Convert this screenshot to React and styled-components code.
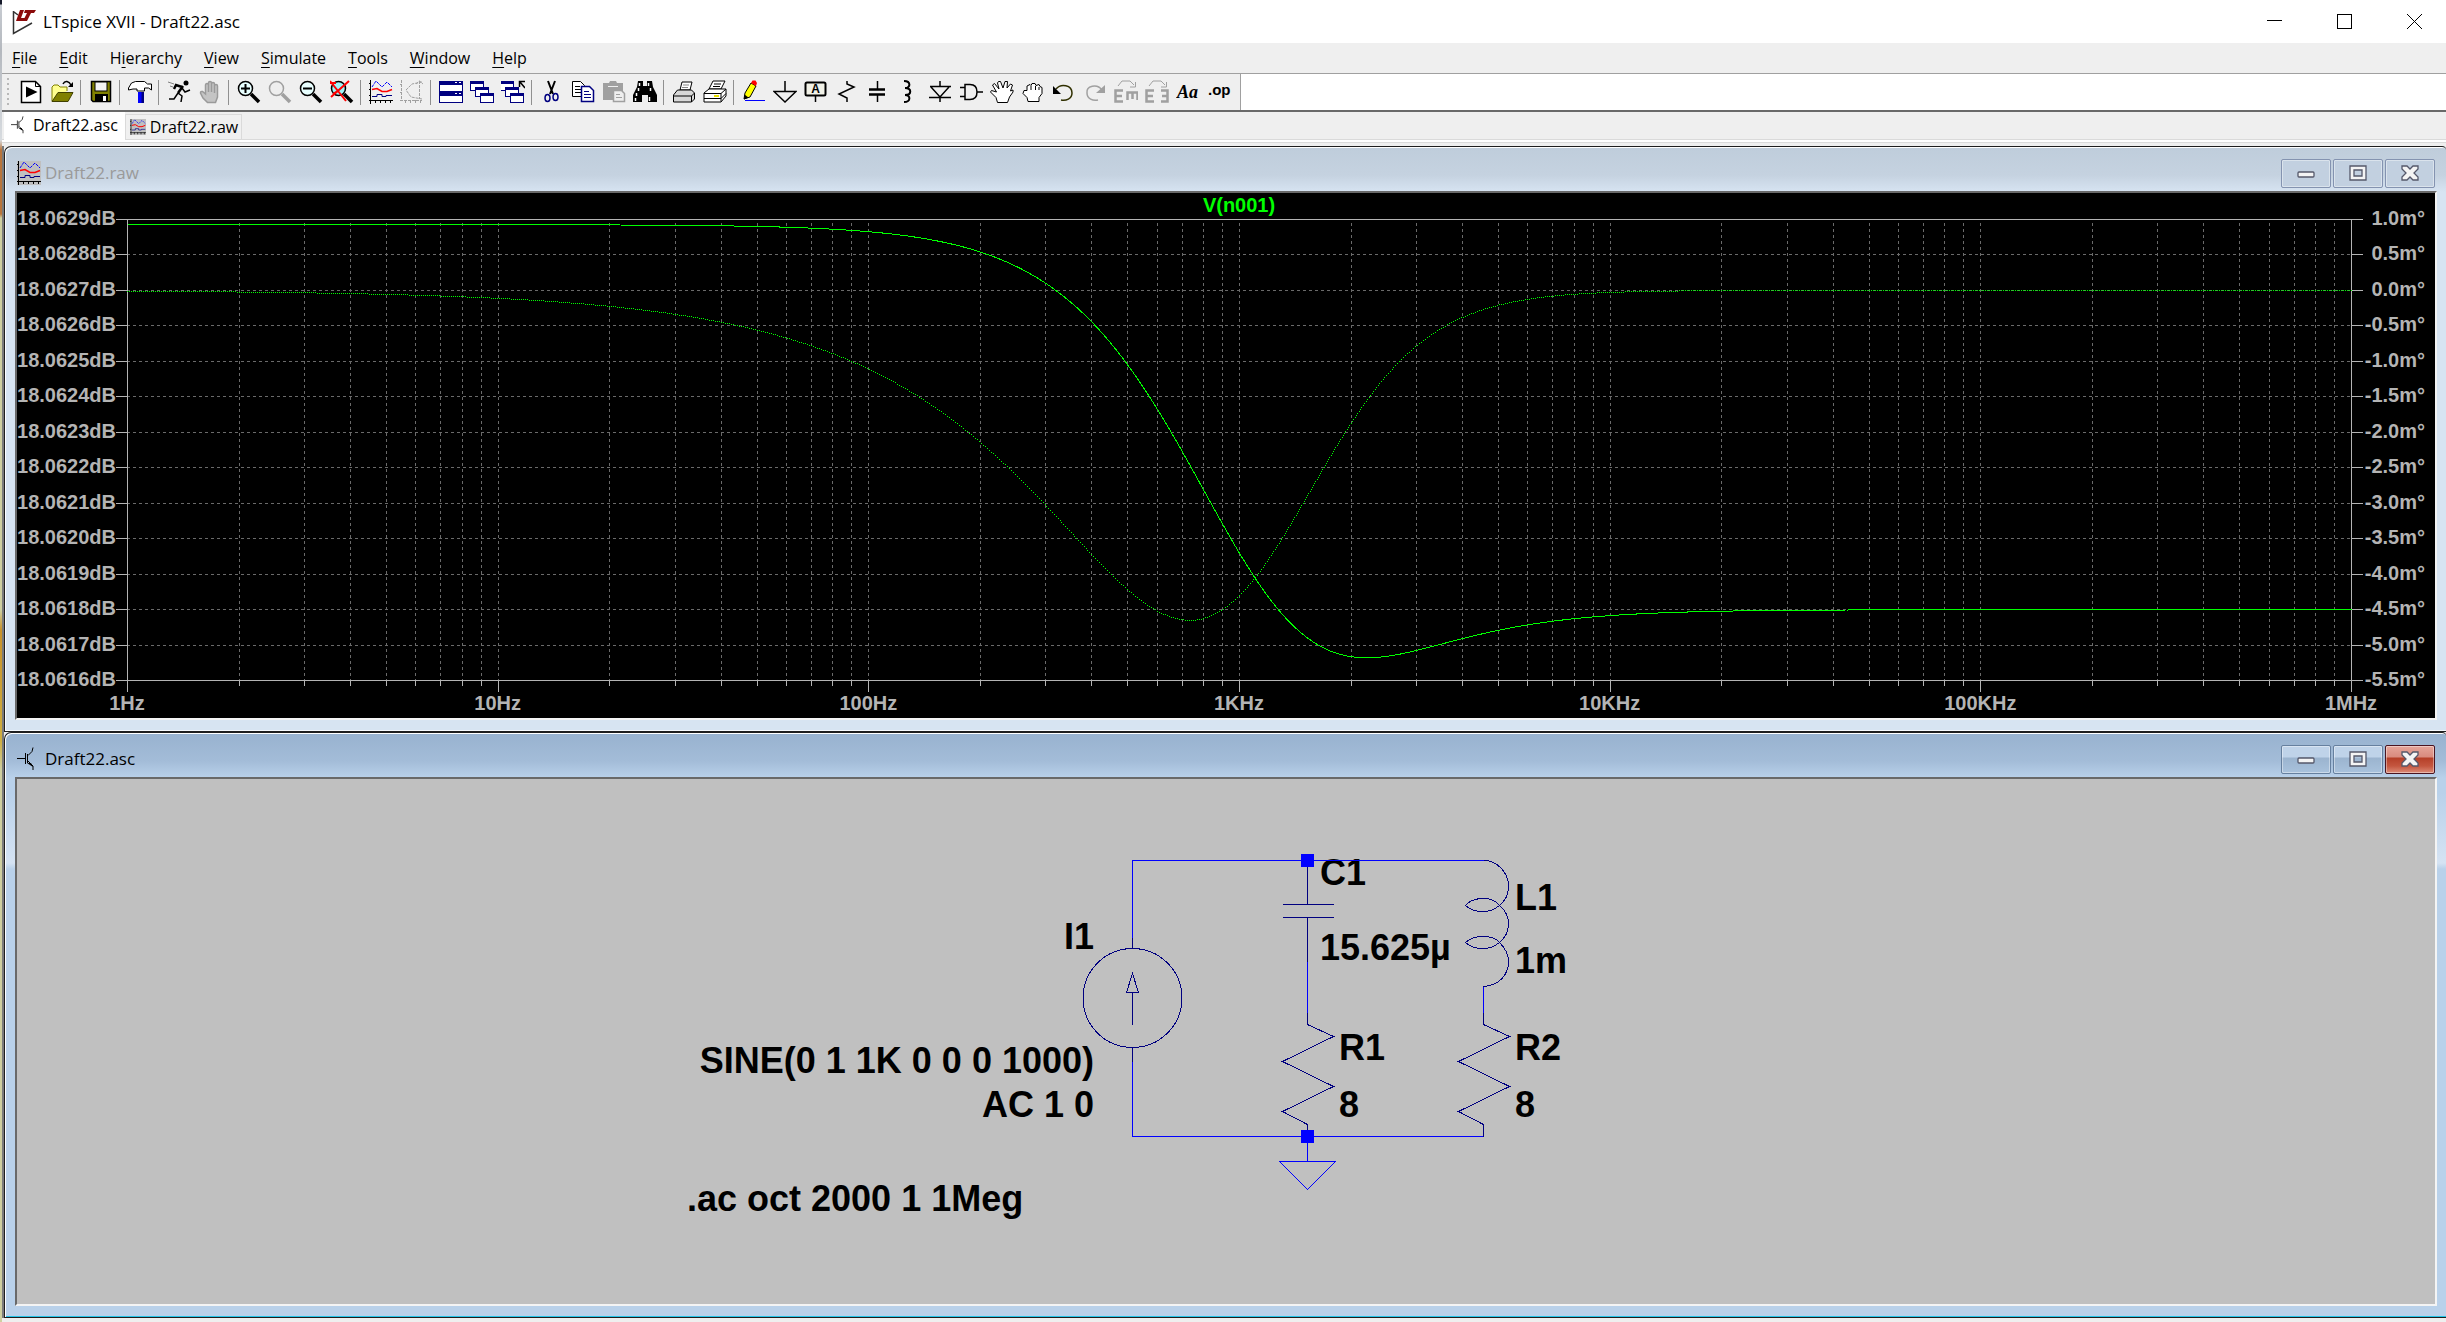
import { useLayoutEffect, useRef, useState } from "react";
import styled, { createGlobalStyle } from "styled-components";

const UI_FONT = `"Open Sans", "Noto Sans", sans-serif`;
const PLOT_FONT = `"Liberation Sans", Arial, sans-serif`;

const GlobalStyle = createGlobalStyle`
  * {
    box-sizing: border-box;
  }
  body {
    margin: 0;
    font-family: ${UI_FONT};
    color: #000;
  }
  button {
    font-family: inherit;
    color: inherit;
    border: none;
    background: none;
    padding: 0;
  }
  svg {
    display: block;
  }
`;

const Desktop = styled.div`
  min-height: 100vh;
  padding-left: 2px;
  display: flex;
  background: linear-gradient(
    #15192a 0, #15192a 4px, #c8ccd2 5px, #b4b8be 50px, #d8dce0 140px,
    #b8753c 150px, #b8753c 214px, #cfcfa0 218px, #cfcfa0 610px,
    #c8922c 630px, #cfae40 740px, #cfcfa0 770px, #cfcfa0 100%
  );
`;

const AppWindow = styled.div`
  flex: 1;
  min-width: 0;
  display: flex;
  flex-direction: column;
  background: #efefef;
`;

const TitleBar = styled.header`
  height: 43px;
  display: flex;
  align-items: center;
  padding-left: 10px;
  background: #fff;
`;

const AppTitle = styled.h1`
  flex: 1;
  margin: 0 0 0 5px;
  font-size: 17px;
  line-height: 24px;
  font-weight: 400;
`;

const SystemButton = styled.button`
  width: 70px;
  height: 43px;
  padding-left: 8px;
  display: flex;
  align-items: center;
  justify-content: center;
`;

const MenuBar = styled.nav`
  height: 31px;
  display: flex;
  border-bottom: 1px solid #a0a0a0;
`;

const MenuItem = styled.button`
  padding: 0 11px;
  font-size: 16px;
  line-height: 30px;

  &:first-child {
    padding-left: 10px;
  }

  u {
    text-underline-offset: 3px;
  }
`;

const ToolBarRow = styled.div`
  height: 38px;
  display: flex;
  background: #fff;
  border-bottom: 2px solid #696969;
`;

const ToolBar = styled.div`
  display: flex;
  align-items: center;
  padding: 0 6px 0 5px;
  background: #efefef;
  border-right: 1px solid #a0a0a0;
`;

const Grip = styled.span`
  width: 2px;
  height: 28px;
  margin-right: 6px;
  background: repeating-linear-gradient(#b8b8b8 0 2px, transparent 2px 5px);
`;

const ToolButton = styled.button`
  width: 31px;
  height: 32px;
  display: flex;
  align-items: center;
  justify-content: center;
`;

const Separator = styled.span`
  width: 8px;
  height: 25px;
  display: flex;
  padding-left: 3px;

  &::before {
    content: "";
    width: 1px;
    background: #909090;
  }
`;

const Tabs = styled.div`
  height: 31px;
  display: flex;
  align-items: flex-start;
  padding-left: 2px;
  background: linear-gradient(
    transparent 27px, #dadada 27px 28px, #fff 28px 30px, #dadada 30px 31px
  );
`;

const Tab = styled.button`
  height: ${(p) => (p.$active ? 30 : 26)}px;
  margin-top: ${(p) => (p.$active ? 0 : 2)}px;
  padding: ${(p) => (p.$active ? "0 7px 4px 7px" : "0 3px 0 4px")};
  display: flex;
  align-items: center;
  gap: 4px;
  font-size: 16px;
  line-height: 24px;
  background: ${(p) => (p.$active ? "#fff" : "#f0f0f0")};
  border: ${(p) => (p.$active ? "none" : "1px solid #dadada")};
`;

const Workspace = styled.main`
  flex: 1;
  margin: 3px 0 4px;
  display: flex;
  flex-direction: column;
  border-left: 2px solid #7a7a7a;
`;

const Child = styled.section`
  flex: 1;
  min-height: 240px;
  display: flex;
  flex-direction: column;
  padding: 0 9px 11px 10px;
  border: 1px solid #1e1e1e;
  border-width: 1px 0 1px 1px;
  border-radius: 7px 4px 0 0;
  box-shadow: inset 1px 1px 0 #fff,
    inset 0 -1px 0 ${(p) => (p.$active ? "#22c4e8" : "#f4f8fc")};
  background: ${(p) =>
    p.$active
      ? "linear-gradient(#98b2cf 0, #a3bcd8 28px, #b9d1ea 45px, #b9d1ea 60px, #d5e3f3 130px, #b9d1ea 136px)"
      : "linear-gradient(#bfcddb 0, #c5d2e0 28px, #d7e4f2 45px)"};
`;

const ChildBar = styled.div`
  flex: none;
  height: 44px;
  padding: 8px 2px 0 2px;
  display: flex;
  align-items: center;
`;

const ChildTitle = styled.h2`
  flex: 1;
  margin: 0 0 0 4px;
  font-size: 17px;
  line-height: 24px;
  font-weight: 400;
  color: ${(p) => (p.$active ? "#000" : "#9a9a9a")};
`;

const ChildButtons = styled.div`
  display: flex;
  gap: 2px;
`;

const buttonFill = {
  idle: "#c2d0e0",
  active: "linear-gradient(#bfd3e9 0 11px, #9bb4cf 12px, #a9c2dc)",
  close: "linear-gradient(#e5a59a 0, #d98b7e 11px, #b53f28 12px, #c4563f 20px, #dc8c78)",
};

const buttonEdge = { idle: "#8493b0", active: "#66809f", close: "#4a1420" };

const ChildButton = styled.button`
  width: 50px;
  height: 29px;
  display: flex;
  align-items: center;
  justify-content: center;
  border: 1px solid ${(p) => buttonEdge[p.$kind]};
  border-radius: 2px;
  box-shadow: inset 0 0 0 1px rgba(255, 255, 255, 0.4);
  background: ${(p) => buttonFill[p.$kind]};
`;

const Well = styled.div`
  flex: 1;
  min-height: 0;
  display: flex;
  border: 2px solid;
  border-color: #696969 #f4f4f4 #f4f4f4 #696969;
  background: ${(p) => (p.$dark ? "#000" : "#c0c0c0")};
  overflow: hidden;
`;

const PlotSvg = styled.svg`
  flex: 1;
  width: 0;
  height: 100%;
  font: bold 20px ${PLOT_FONT};
  fill: #b4b4b4;
`;

const SchematicSvg = styled.svg`
  flex: 1;
  width: 0;
  min-height: 480px;
  font: bold 36px ${PLOT_FONT};
`;

/* ---------- toolbar icons, 24 x 24 ---------- */

const Lens = ({ color = "#000", glass = "#e8ffff", children }) => (
  <>
    <circle cx="8.500" cy="8.500" r="7" fill={glass} stroke={color} strokeWidth="1.500" />
    {children}
    <path d="M14 14l8 8" stroke={color} strokeWidth="3.500" fill="none" />
  </>
);

const TraceIcon = (
  <>
    <path d="M1.500 0v24M0 20.500h24M6.500 20v3M11.500 20v3M16.500 20v3M21.500 20v3M0 3.500h2M0 9.500h2M0 15.500h2" stroke="#000" fill="none" />
    <path d="M3 7l4-6 6 6 5-5 5 5" stroke="#0000ff" strokeDasharray="3 1" fill="none" />
    <path d="M3 9.500l5-1 5 3h5l5-2" stroke="#f00" strokeWidth="1.500" fill="none" />
    <path d="M3 16.500h5v-2h5v2h4v-1h6" stroke="#000080" fill="none" />
  </>
);

const Cascade = (
  <>
    {[[0, 1], [5, 7], [10, 13]].map(([x, y]) => (
      <g key={x}>
        <rect x={x + 0.5} y={y + 0.5} width="13" height="9" fill="#fff" stroke="#000080" />
        <rect x={x} y={y} width="14" height="3" fill="#000080" />
      </g>
    ))}
  </>
);

const icons = {
  run: (
    <>
      <path d="M2.500 1.500h14l5 5v16h-19z" fill="#fff" stroke="#000" strokeWidth="1.500" />
      <path d="M16.500 1.500v5h5" fill="none" stroke="#000" />
      <path d="M7 6.500L18.500 12 7 17.500z" fill="#000" />
    </>
  ),
  open: (
    <>
      <path d="M2 21V7l2-2h4l2 2h7v4" fill="#ffff90" stroke="#808000" />
      <path d="M2 21.500l6-9h15l-5 9z" fill="#808000" stroke="#404000" />
      <path d="M13 4c2-4 6-3 8 1" fill="none" stroke="#000" strokeWidth="1.500" />
      <path d="M23 2v5h-5z" fill="#000" />
    </>
  ),
  save: (
    <>
      <path d="M2.500 1.500h19v20H4l-1.500-1.500z" fill="#808000" stroke="#000" strokeWidth="1.500" />
      <rect x="6" y="2" width="12" height="9" fill="#f4f4f4" stroke="#000" />
      <rect x="6" y="14" width="13" height="8" fill="#000" />
      <rect x="14" y="16" width="3" height="5" fill="#fff" />
    </>
  ),
  hammer: (
    <>
      <path d="M.5 8l3-5 4-1.500h9l3 2.500h4v6l-3-2h-4v3H9V9H5L.5 10z" fill="#fff" stroke="#000" />
      <path d="M10 12h6v11h-6z" fill="#0000ff" />
      <path d="M13.500 12H16v11h-2.500z" fill="#000080" />
    </>
  ),
  runner: (
    <>
      <circle cx="19" cy="3" r="2.500" fill="#000" />
      <path d="M16 6l-5 7M15 7L9 5 7 9" fill="none" stroke="#000" strokeWidth="2.500" />
      <path d="M11 13l4 3-1 6M11 13l-4 6H2M15 8l3 4 5-2" fill="none" stroke="#000" strokeWidth="1.500" />
      <path d="M1 2l6 2M3 6l3 1" stroke="#808080" />
    </>
  ),
  halt: (
    <path d="M7.500 14V5.500q0-2 1.500-2t1.500 2V12 3q0-1.500 1.500-1.500T13.500 3v9-8q0-1.500 1.500-1.500t1.500 1.500v9-7q0-1.500 1.500-1.500t1.500 1.500V17l-2 5.500H9.500L5 18 2.500 13q0-2 2-1.500z" fill="#c4c4c4" stroke="#9a9a9a" strokeWidth="1.500" />
  ),
  zoomIn: (
    <Lens>
      <path d="M8.500 4v9M4 8.500h9" stroke="#000" strokeWidth="2" />
    </Lens>
  ),
  zoomPan: <Lens color="#a0a0a0" glass="#eee" />,
  zoomOut: (
    <Lens>
      <path d="M4 8.500h9" stroke="#000" strokeWidth="2" />
    </Lens>
  ),
  zoomFit: (
    <Lens glass="#a0f4f8">
      <path d="M0 1l16 20M19 1L1 17M0 3h6M3 14l6-4" stroke="#f00" strokeWidth="2" fill="none" />
    </Lens>
  ),
  trace: TraceIcon,
  smith: (
    <path d="M1.500 0v21M0 20.500h22M5.500 20v3M10.500 20v3M15.500 20v3M20.500 20v3M0 4.500h2M0 12.500h2M22 2L12 4 6 10l5 7 11 2M19.500 1v18M16 4l3.500-3L23 4" stroke="#a0a0a0" fill="none" strokeDasharray="3 1" />
  ),
  tile: (
    <>
      {[1, 12].map((y) => (
        <g key={y}>
          <rect x="0.500" y={y + 0.5} width="23" height="10" fill="#fff" stroke="#000080" />
          <rect y={y} width="24" height="4" fill="#000080" />
          <path d={`M16 ${y + 1.5}h2M20 ${y + 1.5}h2`} stroke="#fff" />
        </g>
      ))}
    </>
  ),
  cascade: Cascade,
  closeAll: (
    <>
      <g transform="translate(-1)">{Cascade}</g>
      <path d="M24 8l-5-6M18.500 7V1.500H24" stroke="#000" strokeWidth="1.500" fill="none" />
    </>
  ),
  cut: (
    <>
      <path d="M8 1l5 13M15 1l-5 13" stroke="#000" strokeWidth="2" fill="none" />
      <ellipse cx="7.500" cy="18" rx="2.500" ry="3.500" fill="none" stroke="#000080" strokeWidth="1.500" />
      <ellipse cx="15.500" cy="17" rx="2.500" ry="3.500" fill="none" stroke="#000080" strokeWidth="1.500" />
    </>
  ),
  copy: (
    <>
      <path d="M1.500 1.500h8l4 4v11h-12z" fill="#fff" stroke="#000" />
      <path d="M4 6.500h5M4 9.500h6M4 12.500h6" stroke="#000" />
      <path d="M10.500 6.500h8l4 4v11h-12z" fill="#fff" stroke="#000080" strokeWidth="1.500" />
      <path d="M13 11.500h5M13 14.500h7M13 17.500h7" stroke="#000080" />
    </>
  ),
  paste: (
    <>
      <path d="M1 3h6l1-2h6l1 2h6v17H1z" fill="#a0a0a0" />
      <path d="M6 6.500h10" stroke="#efefef" />
      <path d="M11.500 10.500h8l3 3v8h-11z" fill="#efefef" stroke="#a0a0a0" strokeWidth="1.500" />
      <path d="M14 14.500h4M14 17.500h6" stroke="#a0a0a0" />
    </>
  ),
  find: (
    <>
      <path d="M5 1h5v5h4V1h5l1 6 4 8v7h-9v-7h-6v7H0v-7l4-8z" fill="#000" />
      <path d="M6.500 3v3M5.500 8v3M3.500 13v3M2.500 18v3M15.500 3v3M17.500 8v3M16.500 17v4" stroke="#fff" strokeWidth="1.500" />
    </>
  ),
  print: (
    <>
      <path d="M8 10l2-8h10l-2 8z" fill="#fff" stroke="#000" />
      <path d="M11 5h6M10 7.500h6" stroke="#888" />
      <path d="M1.500 15l4-5h14l3 3v6l-3 3h-18z" fill="#d8d8d8" stroke="#000" />
      <path d="M1.500 16h18v6M19.500 16l3-3" fill="none" stroke="#000" />
    </>
  ),
  printSetup: (
    <>
      <path d="M6 9l4-8h12l-4 8z" fill="#fff" stroke="#000" />
      <path d="M11 4h7M10 6.500h7" stroke="#000" />
      <path d="M1 13l5-4h17v7l-5 6H1z" fill="#fff" stroke="#000" />
      <path d="M1 13.500h17v8M18 13.500l5-4.500M1 18.500h17l5-5" fill="none" stroke="#000" />
      <path d="M11 16h5" stroke="#e8e000" strokeWidth="2" />
    </>
  ),
  pencil: (
    <>
      <path d="M2 19l1-6 6-10 5 3-6 11z" fill="#ffff00" stroke="#000" />
      <path d="M9 3l1.500-2.500h3L15 3l-1 3z" fill="#f00" />
      <path d="M2 19.500l.5-5 4 3z" fill="#000" />
      <path d="M3 20.500h20" stroke="#0000ff" />
    </>
  ),
  ground: <path d="M12 1v10M1 11.500h22L12 22z" fill="none" stroke="#000" strokeWidth="1.500" />,
  label: (
    <>
      <rect x="1.500" y="2.500" width="20" height="13" rx="1.500" fill="#f2f2e8" stroke="#000" strokeWidth="2" />
      <path d="M11.500 16v6" stroke="#000" strokeWidth="1.500" />
      <text x="11.500" y="13" textAnchor="middle" fontSize="12" fontWeight="700" fontFamily={PLOT_FONT}>A</text>
    </>
  ),
  resistor: <path d="M12 1v3l7 3L4 14l8 4v4" fill="none" stroke="#000" strokeWidth="1.500" />,
  capacitor: (
    <>
      <path d="M11.500 1v8M11.500 15v7" stroke="#000" strokeWidth="1.500" />
      <path d="M3 9.500h16M3 14.500h16" stroke="#000" strokeWidth="2.500" />
    </>
  ),
  inductor: <path d="M7 1c7 0 7 7 1 7 7 0 7 7 0 7 6 0 6 7-1 7" fill="none" stroke="#000" strokeWidth="2" />,
  diode: <path d="M12 1v5M2 6.500h21M3 7l9 10 9-10M1 17.500h22M12 17v5" fill="none" stroke="#000" strokeWidth="1.500" />,
  gate: <path d="M6 4.500h5q7 0 7 7.500t-7 7.500H6zM1 7.500h5M1 16.500h5M18 12h6" fill="none" stroke="#000" strokeWidth="1.500" />,
  move: (
    <path d="M7.500 22.500L6 17.500.500 12l1-1.500 5 1.500-4-7L4.500 3.500 9 9 7.500 3l1-1.500h2L13 8l2-6.500h2.500L17 8l3.500-4 2 1-2 6 2.500-1v2l-3.500 5-2 5.500z" fill="#fff" stroke="#000" />
  ),
  drag: (
    <path d="M7 21.500l-1-4-4-4 1-3h3V6l3-1.500 1 1 1-2h3l1 2 3-1 1 2 2 1v6l-3 4v4z M10 6v4M14.500 6v4M18 7v3" fill="#fff" stroke="#000" />
  ),
  undo: (
    <>
      <path d="M4 9C9 3 20 5 20 13c0 6-6 8-11 7" fill="none" stroke="#303000" strokeWidth="1.500" />
      <path d="M1 6v8h8z" fill="#000" />
    </>
  ),
  redo: (
    <>
      <path d="M19 10C14 3 3 6 4 13c0 6 6 8 11 7" fill="none" stroke="#a0a0a0" strokeWidth="1.500" />
      <path d="M22 5v8h-9z" fill="#a0a0a0" />
    </>
  ),
  rotate: (
    <>
      <path d="M4 6l4-5h8l4 4M21.500 2v5H16" fill="none" stroke="#a0a0a0" />
      <path d="M9 10.500H1.500v11H9M1.500 16H8" fill="none" stroke="#a0a0a0" strokeWidth="2.500" />
      <path d="M13.500 20v-7.500h10V20M18.500 12.500V19" fill="none" stroke="#a0a0a0" strokeWidth="2.500" />
    </>
  ),
  mirror: (
    <>
      <path d="M4 6l4-5h8l4 4M21.500 2v5H16" fill="none" stroke="#a0a0a0" />
      <path d="M9 10.500H1.500v11H9M1.500 16H8M16 10.500h6.500v11H16M22 16h-5" fill="none" stroke="#a0a0a0" strokeWidth="2.500" />
    </>
  ),
  text: (
    <text x="1" y="18" fontSize="18" fontWeight="700" fontStyle="italic" fontFamily={`"Liberation Serif", serif`}>Aa</text>
  ),
  op: (
    <text x="1" y="15" fontSize="15" fontWeight="700" fontFamily={PLOT_FONT}>.op</text>
  ),
};

const toolGroups = [
  [["run", "New Schematic"], ["open", "Open"]],
  [["save", "Save"]],
  [["hammer", "Control Panel"]],
  [["runner", "Run"], ["halt", "Halt"]],
  [["zoomIn", "Zoom to rectangle"], ["zoomPan", "Pan"], ["zoomOut", "Zoom back"], ["zoomFit", "Zoom full extents"]],
  [["trace", "Autorange"], ["smith", "Smith chart"]],
  [["tile", "Tile windows"], ["cascade", "Cascade windows"], ["closeAll", "Close all"]],
  [["cut", "Cut"], ["copy", "Copy"], ["paste", "Paste"], ["find", "Find"]],
  [["print", "Print"], ["printSetup", "Print setup"]],
  [
    ["pencil", "Wire"], ["ground", "Ground"], ["label", "Label net"], ["resistor", "Resistor"],
    ["capacitor", "Capacitor"], ["inductor", "Inductor"], ["diode", "Diode"], ["gate", "Component"],
    ["move", "Move"], ["drag", "Drag"], ["undo", "Undo"], ["redo", "Redo"], ["rotate", "Rotate"],
    ["mirror", "Mirror"], ["text", "Text"], ["op", "SPICE directive"],
  ],
];

const Icon = ({ children, size = 24 }) => (
  <svg width={size} height={size} viewBox="0 0 24 24" aria-hidden="true">
    {children}
  </svg>
);

const SchematicIcon = ({ size }) => (
  <Icon size={size}>
    <path d="M0 11.500h8M8.500 6v11M10.500 7v9M11 8.500l4-4 1-4M11 14l5 5v4" stroke="#000" fill="none" />
    <path d="M10 16h4l2 4z" fill="#000" />
  </Icon>
);

const RawIcon = ({ size }) => (
  <Icon size={size}>
    <rect width="24" height="24" fill="#c0c0c0" />
    {TraceIcon}
  </Icon>
);

const Logo = () => (
  <svg width="26" height="26" viewBox="0 0 26 26" aria-hidden="true">
    <path d="M1.500 2v22.500L20 14M2 3l4 3" fill="none" stroke="#333" strokeWidth="1.500" />
    <path d="M8 1h4L9 9h4l-1 3H4zM13 1h11l-2 3h-3l-4 8h-4l4-8h-3z" fill="#8b0a0a" />
  </svg>
);

/* ---------- menu ---------- */

const menus = [
  ["", "F", "ile"],
  ["", "E", "dit"],
  ["H", "i", "erarchy"],
  ["", "V", "iew"],
  ["", "S", "imulate"],
  ["", "T", "ools"],
  ["", "W", "indow"],
  ["", "H", "elp"],
];

/* ---------- child window frame ---------- */

const glyph = { fill: "#f4f4f4", stroke: "#55586a", strokeWidth: 1.3 };

const ChildWindow = ({ title, icon, active, dark, children }) => {
  const kind = active ? "active" : "idle";
  return (
    <Child $active={active} aria-label={title}>
      <ChildBar>
        {icon}
        <ChildTitle $active={active}>{title}</ChildTitle>
        <ChildButtons>
          <ChildButton $kind={kind} aria-label="Minimize">
            <svg width="18" height="18">
              <rect x="1" y="8" width="16" height="5" rx="1" {...glyph} />
            </svg>
          </ChildButton>
          <ChildButton $kind={kind} aria-label="Maximize">
            <svg width="18" height="18">
              <path fillRule="evenodd" d="M1 2h16v14H1zM5 6h8v6H5z" {...glyph} />
            </svg>
          </ChildButton>
          <ChildButton $kind={active ? "close" : "idle"} aria-label="Close">
            <svg width="18" height="18">
              <path d="M1 2h5l3 3 3-3h5v3l-4 4 4 4v3h-5l-3-3-3 3H1v-3l4-4-4-4z" {...glyph} />
            </svg>
          </ChildButton>
        </ChildButtons>
      </ChildBar>
      <Well $dark={dark}>{children}</Well>
    </Child>
  );
};

/* ---------- bode plot ---------- */

const DECADES = ["1Hz", "10Hz", "100Hz", "1KHz", "10KHz", "100KHz", "1MHz"];
const STEPS = 13;

// 8 ohm crossover with 1 milliohm of series resistance in the coil
const response = (freq) => {
  const x = (2 * Math.PI * freq * 0.001) / 8;
  const d = 0.000125 / (1 + x * x) ** 2;
  const re = 1 + d * (1 - x * x);
  const im = -2 * x * d;
  return {
    db: 20 * Math.log10(8 * Math.hypot(re, im)),
    phase: (Math.atan2(im, re) * 180000) / Math.PI,
  };
};

// every second pixel along the curve, so steep parts are dotted like flat ones
const dotted = (points) => {
  let path = "";
  let count = 0;
  let last = points[0][1];
  points.forEach(([x, y]) => {
    const dir = Math.sign(y - last);
    let cy = last === y ? y : last + dir;
    for (;;) {
      if (count++ % 2 === 0) path += `M${x} ${cy + 0.5}h1`;
      if (cy === y) break;
      cy += dir;
    }
    last = y;
  });
  return path;
};

const useSize = () => {
  const ref = useRef(null);
  const [size, setSize] = useState({ width: 0, height: 0 });
  useLayoutEffect(() => {
    const measure = () => {
      const box = ref.current.getBoundingClientRect();
      setSize({ width: Math.round(box.width), height: Math.round(box.height) });
    };
    measure();
    const observer = new ResizeObserver(measure);
    observer.observe(ref.current);
    return () => observer.disconnect();
  }, []);
  return [ref, size];
};

const Plot = () => {
  const [ref, { width, height }] = useSize();
  const left = 110;
  const right = width - 84;
  const top = 26;
  const bottom = height - 38;
  const decade = (right - left) / 6;
  const step = (bottom - top) / STEPS;
  const px = (v) => Math.round(v) + 0.5;

  const rows = Array.from({ length: STEPS + 1 }, (_, i) => ({
    y: px(top + i * step),
    db: `${(18.0629 - i * 0.0001).toFixed(4)}dB`,
    phase: `${(1 - i * 0.5).toFixed(1)}m°`,
  }));

  const columns = [];
  for (let d = 0; d < 6; d++) {
    for (let n = 1; n < 10; n++) {
      columns.push({ x: px(left + (d + Math.log10(n)) * decade), major: n === 1 });
    }
  }
  columns.push({ x: px(right), major: true });

  const db = [];
  const phase = [];
  for (let x = left; x <= right; x++) {
    const r = response(10 ** ((x - left) / decade));
    db.push(`${x + 0.5},${(top + 0.5 + ((18.0629 - r.db) / 0.0001) * step).toFixed(2)}`);
    phase.push([x, Math.round(top + ((1 - r.phase) / 0.5) * step)]);
  }

  return (
    <PlotSvg ref={ref} role="img" aria-label="V(n001) magnitude and phase">
      {width > 300 && (
        <>
          <g stroke="#6a6a6a" strokeDasharray="3 3" shapeRendering="crispEdges">
            {rows.slice(1, -1).map((r) => (
              <line key={r.y} x1={left} x2={right} y1={r.y} y2={r.y} />
            ))}
            {columns.slice(1, -1).map((c) => (
              <line key={c.x} x1={c.x} x2={c.x} y1={top + 4} y2={bottom} />
            ))}
          </g>
          <g stroke="#b4b4b4" fill="none" shapeRendering="crispEdges">
            <rect x={left + 0.5} y={top + 0.5} width={right - left} height={bottom - top} />
            {rows.map((r) => (
              <path key={r.y} d={`M${left - 11} ${r.y}h11M${right} ${r.y}h12`} />
            ))}
            {columns.map((c) => (
              <path key={c.x} d={`M${c.x} ${bottom}v${c.major ? 12 : 6}`} />
            ))}
          </g>
          <path d={dotted(phase)} stroke="#00ff00" shapeRendering="crispEdges" />
          <polyline points={db.join(" ")} fill="none" stroke="#00ff00" shapeRendering="crispEdges" />
          {rows.map((r) => (
            <g key={r.y} textAnchor="end">
              <text x={left - 11} y={r.y + 5.5}>{r.db}</text>
              <text x={width - 10} y={r.y + 5.5}>{r.phase}</text>
            </g>
          ))}
          {DECADES.map((name, i) => (
            <text key={name} x={left + i * decade} y={bottom + 30} textAnchor="middle">
              {name}
            </text>
          ))}
          <text x={(left + right) / 2} y={top - 7} textAnchor="middle" fill="#00ff00">
            V(n001)
          </text>
        </>
      )}
    </PlotSvg>
  );
};

/* ---------- schematic ---------- */

const WIRE = "#0000ff";
const PART = "#000080";

const Resistor = ({ x, y }) => (
  <path d={`M${x} ${y}v12l26 12-51 25 51 25-51 25 25 13v12`} />
);

const Inductor = ({ x, y }) => (
  <path
    transform={`translate(${x} ${y})`}
    d="M0 0C14 0 25 12 25 26 25 34 22 40 16 45 11 49 6 51 0 51-7 51-14 49-18 45-14 40-7 38 0 38 7 38 12 40 16 45 22 50 25 56 25 63 25 71 22 77 16 82 11 86 6 88 0 88-7 88-14 86-18 82-14 78-7 76 0 76 7 76 12 77 16 82 22 88 25 94 25 101 25 114 16 125 0 126"
  />
);

const labels = [
  [1077, 170, "I1", "end"],
  [1077, 294, "SINE(0 1 1K 0 0 0 1000)", "end"],
  [1077, 338, "AC 1 0", "end"],
  [670, 432, ".ac oct 2000 1 1Meg"],
  [1303, 106, "C1"],
  [1303, 181, "15.625µ"],
  [1322, 281, "R1"],
  [1322, 338, "8"],
  [1498, 131, "L1"],
  [1498, 194, "1m"],
  [1498, 281, "R2"],
  [1498, 338, "8"],
];

const Schematic = () => (
  <SchematicSvg role="img" aria-label="Crossover schematic">
    {labels.map(([x, y, text, anchor]) => (
      <text key={`${x}-${y}`} x={x} y={y} textAnchor={anchor || "start"}>
        {text}
      </text>
    ))}
    <g transform="translate(0.5 0.5)" fill="none" shapeRendering="crispEdges">
      <g stroke={WIRE}>
        <path d="M1115 159V81H1466M1115 281V357H1466M1290 182v51M1466 207v26" />
        <path d="M1290 357v25M1262 382h56l-28 28z" />
      </g>
      <g stroke={PART}>
        <path d="M1115 158v11M1115 268v14M1290 81v44M1265 125h51M1265 138h51M1290 138v44" />
        <circle cx="1115" cy="218.500" r="49.500" />
        <path d="M1115 245v-32M1109 213h12l-6-19z" />
        <Resistor x={1290} y={233} />
        <Resistor x={1466} y={233} />
        <Inductor x={1466} y={81} />
      </g>
    </g>
    <rect x="1284" y="75" width="13" height="13" fill={WIRE} />
    <rect x="1284" y="351" width="13" height="13" fill={WIRE} />
  </SchematicSvg>
);

const App = () => {
  return (
    <>
      <GlobalStyle />
      <Desktop>
        <AppWindow>
          <TitleBar>
            <Logo />
            <AppTitle>LTspice XVII - Draft22.asc</AppTitle>
            <SystemButton aria-label="Minimize">
              <svg width="16" height="16">
                <path d="M0 6.500h15" stroke="#000" />
              </svg>
            </SystemButton>
            <SystemButton aria-label="Maximize">
              <svg width="16" height="16">
                <rect x="0.500" y="0.500" width="14" height="14" fill="none" stroke="#000" />
              </svg>
            </SystemButton>
            <SystemButton aria-label="Close">
              <svg width="16" height="16">
                <path d="M0 0l15 15M15 0L0 15" stroke="#000" />
              </svg>
            </SystemButton>
          </TitleBar>
          <MenuBar>
            {menus.map(([before, key, after]) => (
              <MenuItem key={key + after}>
                {before}
                <u>{key}</u>
                {after}
              </MenuItem>
            ))}
          </MenuBar>
          <ToolBarRow>
            <ToolBar role="toolbar" aria-label="Main">
              <Grip />
              {toolGroups.map((group, i) => [
                i > 0 && <Separator key={i} />,
                ...group.map(([name, label]) => (
                  <ToolButton key={name} aria-label={label}>
                    <Icon>{icons[name]}</Icon>
                  </ToolButton>
                )),
              ])}
            </ToolBar>
          </ToolBarRow>
          <Tabs>
            <Tab $active>
              <SchematicIcon size={18} />
              Draft22.asc
            </Tab>
            <Tab>
              <RawIcon size={16} />
              Draft22.raw
            </Tab>
          </Tabs>
          <Workspace>
            <ChildWindow title="Draft22.raw" icon={<RawIcon />} dark>
              <Plot />
            </ChildWindow>
            <ChildWindow title="Draft22.asc" icon={<SchematicIcon />} active>
              <Schematic />
            </ChildWindow>
          </Workspace>
        </AppWindow>
      </Desktop>
    </>
  );
};

export default App;
